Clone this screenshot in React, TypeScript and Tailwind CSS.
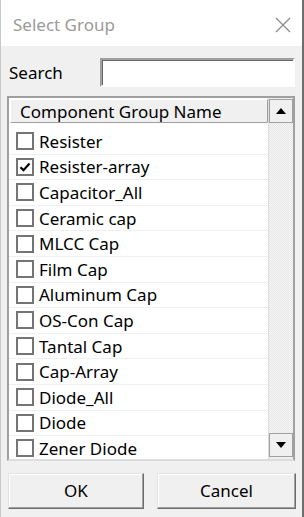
import React from "react";

const groups = [
  { name: "Resister", checked: false },
  { name: "Resister-array", checked: true },
  { name: "Capacitor_All", checked: false },
  { name: "Ceramic cap", checked: false },
  { name: "MLCC Cap", checked: false },
  { name: "Film Cap", checked: false },
  { name: "Aluminum Cap", checked: false },
  { name: "OS-Con Cap", checked: false },
  { name: "Tantal Cap", checked: false },
  { name: "Cap-Array", checked: false },
  { name: "Diode_All", checked: false },
  { name: "Diode", checked: false },
  { name: "Zener Diode", checked: false },
];

function CheckBox({ checked }: { checked: boolean }) {
  return (
    <span className="flex h-[18px] w-[18px] shrink-0 items-center justify-center border-2 border-[#747474] bg-white">
      {checked ? (
        <svg width="12" height="12" viewBox="0 0 12 12">
          <path d="M1.5 6.2 L4.5 9.2 L10.5 2.6" fill="none" stroke="#000" strokeWidth="2.2" />
        </svg>
      ) : null}
    </span>
  );
}

function ScrollButton({ up }: { up: boolean }) {
  return (
    <div className="flex h-[24px] w-[24px] items-center justify-center border border-[#a0a0a0] bg-[#f0f0f0]">
      <svg width="10" height="6" viewBox="0 0 10 6">
        {up ? <path d="M0 6 L5 0 L10 6 Z" fill="#000" /> : <path d="M0 0 L5 6 L10 0 Z" fill="#000" />}
      </svg>
    </div>
  );
}

export default function App() {
  return (
    <div
      className="flex h-[517px] w-[304px] flex-col border-l border-r-2 border-l-[#c8c8c8] border-r-[#6e6e6e] bg-[#f0f0f0] text-[17px] text-black"
      style={{ fontFamily: '"Noto Sans", "Liberation Sans", sans-serif' }}
    >
      {/* title bar */}
      <div className="flex h-[46px] shrink-0 items-center justify-between bg-white pl-[12px] pr-[10px] pt-[3px]">
        <span className="text-[#9a9a9a]">Select Group</span>
        <svg width="16" height="16" viewBox="0 0 16 16" className="mr-[1px]">
          <path d="M1 1 L15 15 M15 1 L1 15" stroke="#8a8a8a" strokeWidth="1.2" />
        </svg>
      </div>

      <div className="flex flex-1 flex-col px-[6px]">
        {/* search */}
        <div className="mt-[12px] flex h-[29px] items-center">
          <span className="ml-[2px] w-[91px]">Search</span>
          <input
            className="h-[29px] w-[195px] border-2 border-t-[#a0a0a0] border-l-[#a0a0a0] border-b-white border-r-white bg-white outline-none"
            style={{ boxShadow: "inset 1px 1px 0 #696969" }}
          />
        </div>

        {/* list */}
        <div className="mt-[9px] flex h-[365px] w-[288px] border-2 border-t-[#a0a0a0] border-l-[#a0a0a0] border-b-[#dcdcdc] border-r-[#a0a0a0] bg-white">
          <div className="flex min-w-0 flex-1 flex-col overflow-hidden">
            <div className="ml-[1px] mt-[1px] flex h-[24px] shrink-0 items-center border border-t-white border-l-white border-b-[#a0a0a0] border-r-[#a0a0a0] bg-[#f0f0f0] pl-[9px] leading-none">
              Component Group Name
            </div>
            <div className="mt-[6px] flex flex-col">
              {groups.map((g) => (
                <div
                  key={g.name}
                  className="flex h-[25.6px] shrink-0 items-center gap-[5px] border-b border-[#f0f0f0] pl-[7px] leading-none"
                >
                  <CheckBox checked={g.checked} />
                  <span>{g.name}</span>
                </div>
              ))}
            </div>
          </div>
          <div className="flex w-[25px] flex-col border-l border-[#dcdcdc] bg-[repeating-conic-gradient(#e6e6e6_0_25%,#f6f6f6_0_50%)] bg-[length:2px_2px] pt-[1px]">
            <ScrollButton up />
            <div className="flex-1" />
            <div className="mb-[2px]">
              <ScrollButton up={false} />
            </div>
          </div>
        </div>

        {/* buttons */}
        <div className="mt-[12px] flex gap-[13px] pl-[1px]">
          <button className="flex h-[36px] w-[136px] items-center justify-center border border-t-[#e3e3e3] border-l-[#e3e3e3] border-b-[#6d6d6d] border-r-[#6d6d6d] bg-[#f0f0f0] shadow-[inset_-1px_-1px_0_#a0a0a0,inset_1px_1px_0_#fff]">
            OK
          </button>
          <button className="flex h-[36px] w-[139px] items-center justify-center border border-t-[#e3e3e3] border-l-[#e3e3e3] border-b-[#6d6d6d] border-r-[#6d6d6d] bg-[#f0f0f0] shadow-[inset_-1px_-1px_0_#a0a0a0,inset_1px_1px_0_#fff]">
            Cancel
          </button>
        </div>
      </div>
    </div>
  );
}
